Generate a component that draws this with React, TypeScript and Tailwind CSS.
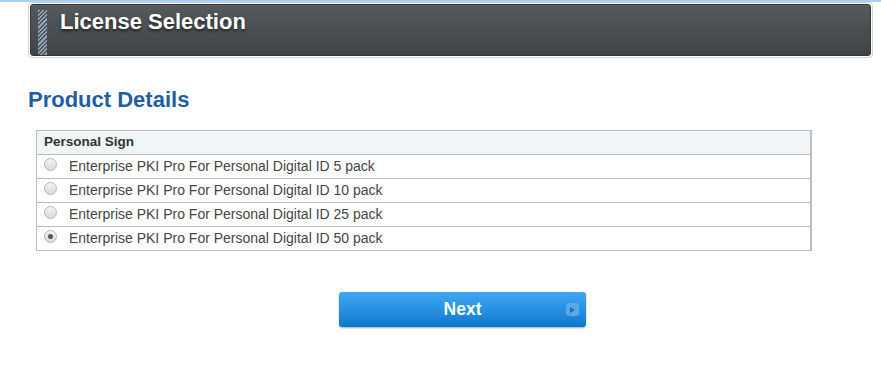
const packs = [5, 10, 25, 50];

function Radio({ checked }: { checked: boolean }) {
  return (
    <span className="flex h-[13px] w-[13px] shrink-0 items-center justify-center rounded-full border border-[#b5b5b5] bg-gradient-to-b from-[#f4f4f4] to-[#d8d8d8]">
      {checked && <span className="h-[5px] w-[5px] rounded-full bg-[#555]" />}
    </span>
  );
}

export default function App() {
  return (
    <div className="h-[387px] w-[881px] bg-white font-['Liberation_Sans',Arial,sans-serif]">
      <div className="h-[2px] w-full bg-[#a9cfee]" />

      <div className="ml-[28px] w-[845px] rounded-[4px] border border-[#cfd3d6] p-[1px]">
        <div className="flex h-[52px] rounded-[3px] border border-[#333638] bg-gradient-to-b from-[#555a5d] to-[#404446] shadow-[inset_0_1px_0_#62676a]">
          <div className="ml-[7px] mt-[5px] w-[9px] bg-[repeating-linear-gradient(135deg,#8fa3b3_0px,#8fa3b3_1.5px,#4d5860_1.5px,#4d5860_3px)]" />
          <h1 className="ml-[13px] mt-[4px] text-[22px] font-bold leading-[25px] text-white [text-shadow:0_2px_3px_rgba(0,0,0,0.6)]">
            License Selection
          </h1>
        </div>
      </div>

      <h2 className="ml-[28px] mt-[29px] text-[22px] font-bold leading-[25px] text-[#1d5ea6]">
        Product Details
      </h2>

      <div className="ml-[36px] mt-[18px] w-[776px] border border-r-2 border-[#bdbdbd] text-[#333]">
        <div className="flex h-[23px] items-center bg-[#f0f5f8] pl-[7px] text-[13.5px] font-bold">
          Personal Sign
        </div>
        {packs.map((n) => (
          <label
            key={n}
            className="flex h-[24px] items-center border-t border-[#bdbdbd] pl-[7px]"
          >
            <span className="-mt-[5px]">
              <Radio checked={n === 50} />
            </span>
            <span className="-mt-[1px] ml-[12px] text-[14px] text-[#444]">
              Enterprise PKI Pro For Personal Digital ID {n} pack
            </span>
          </label>
        ))}
      </div>

      <div className="flex pl-[339px] pt-[41px]">
        <button className="relative flex h-[35px] w-[247px] items-center justify-center rounded-[3px] bg-gradient-to-b from-[#40a8f5] to-[#0a78cf] text-[17.5px] font-bold text-white shadow-[0_1px_2px_rgba(0,0,0,0.35)]">
          Next
          <span className="absolute right-[7px] top-[11px] flex h-[13px] w-[13px] items-center justify-center rounded-[3px] bg-[#5aa9e6]">
            <svg width="5" height="6" viewBox="0 0 5 6">
              <path d="M0 0L5 3L0 6Z" fill="#1e6fb8" />
            </svg>
          </span>
        </button>
      </div>
    </div>
  );
}
